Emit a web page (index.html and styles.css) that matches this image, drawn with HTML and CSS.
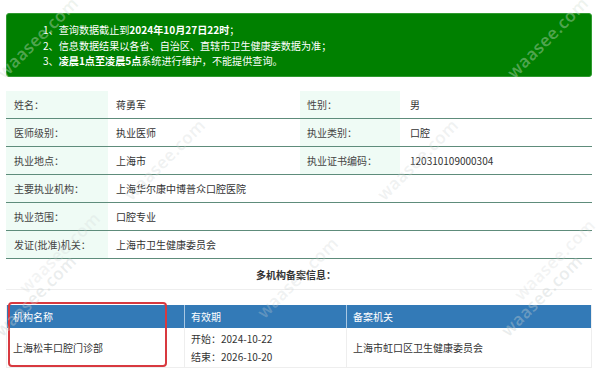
FILE: index.html
```html
<!DOCTYPE html>
<html lang="zh-CN">
<head>
<meta charset="utf-8">
<link rel="stylesheet" href="styles.css">
</head>
<body>
<div class="page">
  <div class="notice">
    <p>1、查询数据截止到<b>2024年10月27日22时</b>；</p>
    <p>2、信息数据结果以各省、自治区、直辖市卫生健康委数据为准；</p>
    <p>3、<b>凌晨1点至凌晨5点</b>系统进行维护，不能提供查询。</p>
  </div>

  <div class="info">
    <div class="row">
      <div class="lab">姓名：</div><div class="val">蒋勇军</div>
      <div class="lab">性别：</div><div class="val">男</div>
    </div>
    <div class="row">
      <div class="lab">医师级别：</div><div class="val">执业医师</div>
      <div class="lab">执业类别：</div><div class="val">口腔</div>
    </div>
    <div class="row">
      <div class="lab">执业地点：</div><div class="val">上海市</div>
      <div class="lab">执业证书编码：</div><div class="val">120310109000304</div>
    </div>
    <div class="row wide">
      <div class="lab">主要执业机构：</div><div class="val">上海华尔康中博普众口腔医院</div>
    </div>
    <div class="row wide">
      <div class="lab">执业范围：</div><div class="val">口腔专业</div>
    </div>
    <div class="row wide">
      <div class="lab">发证(批准)机关：</div><div class="val">上海市卫生健康委员会</div>
    </div>
  </div>

  <div class="multi-title">多机构备案信息：</div>

  <div class="reg">
    <div class="reg-head">
      <div class="c1">机构名称</div>
      <div class="c2">有效期</div>
      <div class="c3">备案机关</div>
    </div>
    <div class="reg-body">
      <div class="c1">上海松丰口腔门诊部</div>
      <div class="c2"><span>开始：2024-10-22</span><span>结束：2026-10-20</span></div>
      <div class="c3">上海市虹口区卫生健康委员会</div>
    </div>
    <div class="highlight"></div>
  </div>

  <div class="wm w1">waasee.com</div>
  <div class="wm w2">waasee.com</div>
  <div class="wm w3">waasee.com</div>
  <div class="wm w4">waasee.com</div>
  <div class="wm w5">waasee.com</div>
  <div class="wm w6">waasee.com</div>
  <div class="wm w7">waasee.com</div>
  <div class="wm w8">waasee.com</div>
  <div class="wm w9">waasee.com</div>
</div>
</body>
</html>
```

FILE: styles.css
```css
* { box-sizing: border-box; }
html, body { margin: 0; padding: 0; background: #fff; }
body {
  font-family: "Microsoft YaHei", "Noto Sans CJK SC", "Noto Sans", sans-serif;
  font-size: 10px;
  color: #333;
  overflow: hidden;
}
.page {
  position: relative;
  width: 600px;
  height: 378px;
  padding: 13px 8px 0 6px;
  overflow: hidden;
}
.notice {
  height: 64px;
  background: #008000;
  border: 1px solid #2f9a2f;
  border-radius: 3px;
  color: #fff;
  padding: 8px 0 0 36px;
  font-size: 10.1px;
}
.notice p {
  margin: 0;
  line-height: 15.5px;
}
.notice b { font-weight: 700; }

.info {
  margin-top: 14px;
  display: flex;
  flex-direction: column;
}
.row {
  display: grid;
  grid-template-columns: 102px 192px 100px 192px;
  height: 28px;
  border-bottom: 1px solid #5e8c7b;
}
.row.wide { grid-template-columns: 102px 484px; }
.lab, .val {
  display: flex;
  align-items: center;
}
.lab {
  background: #effbf5;
  padding-left: 8px;
  color: #444;
}
.val {
  padding-left: 8px;
  color: #333;
}
.row > .lab:nth-child(3) { padding-left: 7px; }
.row > .val:nth-child(4) { padding-left: 10px; }

.multi-title {
  height: 31px;
  display: flex;
  align-items: center;
  justify-content: center;
  font-weight: 700;
  color: #333;
  border-bottom: 1px solid #eee;
  padding-right: 6px;
}

.reg {
  position: relative;
  margin-top: 15px;
  border: 1px solid #eee;
  border-top: none;
}
.reg-head, .reg-body {
  display: grid;
  grid-template-columns: 177px 162px 1fr;
}
.reg-head {
  background: #337ab7;
  color: #fff;
  height: 23px;
}
.reg-head > div {
  display: flex;
  align-items: center;
  padding-left: 6px;
}
.reg-head > div + div { border-left: 1px solid #a9c8e3; }
.reg-body { height: 39px; }
.reg-body > div {
  display: flex;
  align-items: center;
  padding-left: 6px;
  color: #333;
}
.reg-body > div + div { border-left: 1px solid #eee; }
.reg-body .c2 {
  flex-direction: column;
  align-items: flex-start;
  justify-content: center;
  line-height: 18px;
}
.highlight {
  position: absolute;
  left: 1px;
  top: -3px;
  width: 159px;
  height: 65px;
  border: 2px solid #d8393f;
  border-radius: 4px;
}

.wm {
  position: absolute;
  font-family: "Open Sans", "Liberation Sans", sans-serif;
  font-size: 17px;
  font-weight: 600;
  color: rgba(200, 208, 208, 0.38);
  transform: rotate(-45deg);
  transform-origin: left bottom;
  white-space: nowrap;
  pointer-events: none;
  letter-spacing: 0.5px;
}
.w1 { left: 8px; top: 60px; color: rgba(210, 225, 210, 0.4); }
.w2 { left: 518px; top: 60px; color: rgba(210, 225, 210, 0.4); }
.w3 { left: 135px; top: 182px; color: rgba(205, 210, 210, 0.3); }
.w4 { left: 388px; top: 182px; color: rgba(205, 210, 210, 0.3); }
.w5 { left: 30px; top: 275px; color: rgba(205, 210, 210, 0.25); }
.w6 { left: 525px; top: 282px; color: rgba(205, 210, 210, 0.25); }
.w7 { left: 268px; top: 300px; color: rgba(205, 210, 210, 0.3); }
.w8 { left: 6px; top: 318px; }
.w9 { left: 512px; top: 318px; }
```
